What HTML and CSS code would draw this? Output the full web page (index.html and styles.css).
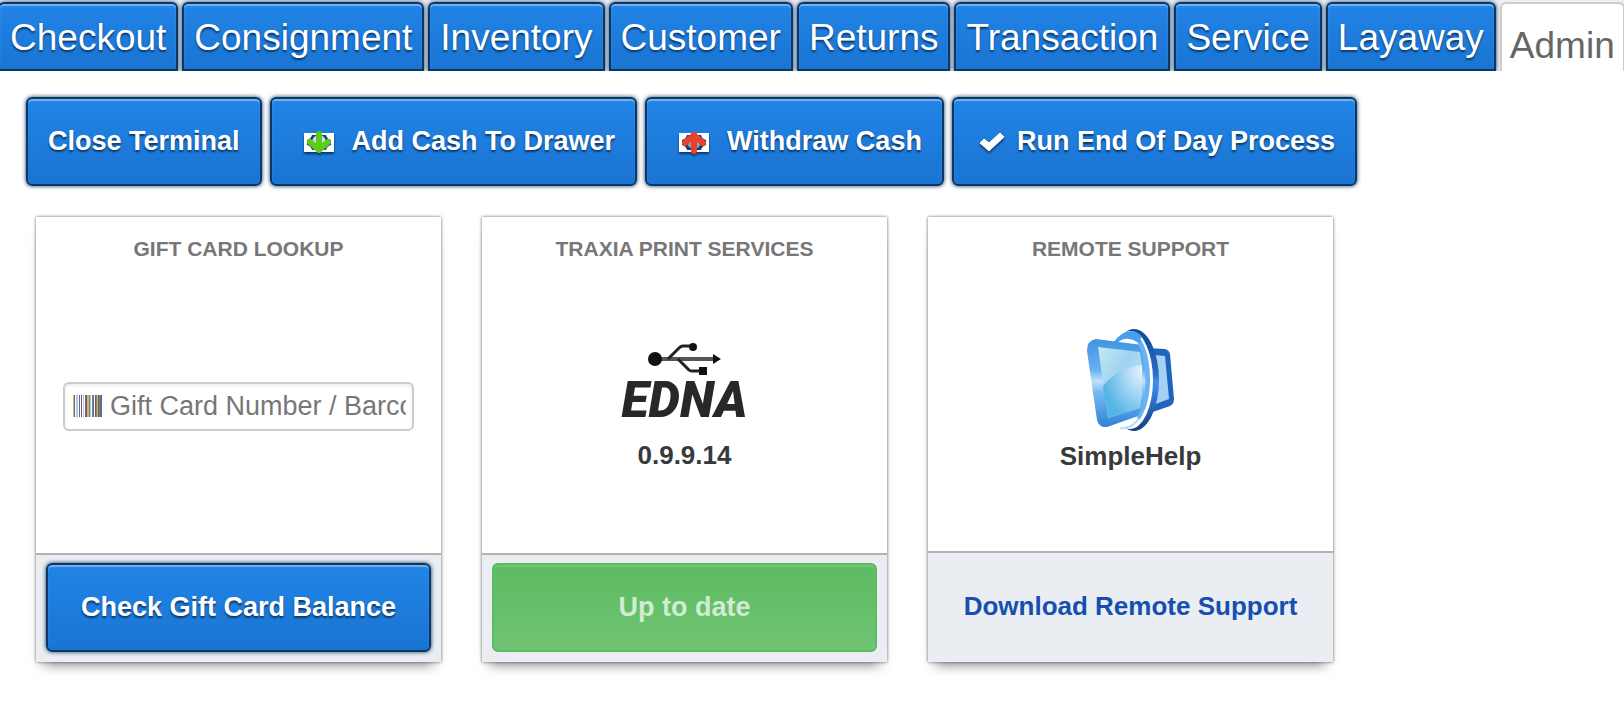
FILE: index.html
```html
<!DOCTYPE html>
<html lang="en">
	<head>
		<meta charset="UTF-8" />
		<meta name="viewport" content="width=device-width, initial-scale=1.0" />
		<title>Admin</title>
		<link rel="stylesheet" href="styles.css">
	</head>
	<body>
		<nav class="tabs">
			<a class="tab" href="#checkout">Checkout</a>
			<a class="tab" href="#consignment">Consignment</a>
			<a class="tab" href="#inventory">Inventory</a>
			<a class="tab" href="#customer">Customer</a>
			<a class="tab" href="#returns">Returns</a>
			<a class="tab" href="#transaction">Transaction</a>
			<a class="tab" href="#service">Service</a>
			<a class="tab" href="#layaway">Layaway</a>
			<a class="tab active" href="#admin" aria-current="page">Admin</a>
		</nav>

		<main class="content">
			<div class="toolbar">
				<button type="button" class="btn">Close Terminal</button>
				<button type="button" class="btn btn-cash">
					<svg width="30" height="24" viewBox="0 0 30 24" aria-hidden="true">
						<rect x="0" y="3" width="30" height="19" fill="#fff" />
						<path d="M8 5h14q1 4 5 5v5q-4 1-5 5H8q-1-4-5-5v-5q4-1 5-5z" fill="#123f73" />
						<ellipse cx="15" cy="12" rx="7" ry="7" fill="#c9dcea" />
						<path d="M15 4v15M6 12l9 8 9-8" fill="none" stroke="#5ccb1a" stroke-width="6" stroke-linecap="round" stroke-linejoin="round" />
					</svg>
					Add Cash To Drawer
				</button>
				<button type="button" class="btn btn-cash">
					<svg width="30" height="24" viewBox="0 0 30 24" aria-hidden="true">
						<rect x="0" y="3" width="30" height="19" fill="#fff" />
						<path d="M8 5h14q1 4 5 5v5q-4 1-5 5H8q-1-4-5-5v-5q4-1 5-5z" fill="#123f73" />
						<ellipse cx="15" cy="12" rx="7" ry="7" fill="#7fa4ad" />
						<path d="M15 21V6M6 13l9-8 9 8" fill="none" stroke="#ea412e" stroke-width="6" stroke-linecap="round" stroke-linejoin="round" />
					</svg>
					Withdraw Cash
				</button>
				<button type="button" class="btn btn-check">
					<svg width="26" height="20" viewBox="0 0 26 20" aria-hidden="true">
						<path d="M1 11l4-4 5 4L21 1l4 4-15 14z" fill="#fff" stroke="#fff" stroke-linejoin="round" />
					</svg>
					Run End Of Day Process
				</button>
			</div>

			<div class="cards">
				<section class="card">
					<h2>Gift Card Lookup</h2>
					<div class="card-body">
						<label class="barcode-field">
							<svg width="29" height="22" viewBox="0 0 29 22" shape-rendering="crispEdges" role="img" aria-label="Barcode">
								<path fill="#e0b070" d="M0 0h1v22H0zM14 0h2v22h-2zM24 0h1v22h-1z" />
								<path fill="#66688c" d="M1 0h1v22H1zM6 0h1v22H6zM12 0h1v22h-1zM20 0h1v22h-1zM27 0h2v22h-2z" />
								<path fill="#a5c8ee" d="M3 0h2v22H3zM10 0h1v22h-1zM17 0h1v22h-1z" />
								<path fill="#8b4a62" d="M8 0h1v22H8zM13 0h1v22h-1zM22 0h1v22h-1zM25 0h1v22h-1z" />
								<path fill="#5f9a72" d="M16 0h1v22h-1zM19 0h1v22h-1zM23 0h1v22h-1zM26 0h1v22h-1z" />
							</svg>
							<input type="text" placeholder="Gift Card Number / Barcode" aria-label="Gift Card Number / Barcode" />
						</label>
					</div>
					<div class="card-footer">
						<button type="button" class="btn">Check Gift Card Balance</button>
					</div>
				</section>

				<section class="card">
					<h2>Traxia Print Services</h2>
					<div class="card-body">
						<div class="edna">
							<svg width="74" height="34" viewBox="0 0 74 34" aria-hidden="true">
								<path d="M8 17h58" stroke="#555" stroke-width="4" />
								<path d="M20 17L31 6q2-2 4-2h9M30 17l11 11q1 1 3 1h8" fill="none" stroke="#222" stroke-width="3" />
								<circle cx="7" cy="17" r="7" fill="#111" />
								<circle cx="45" cy="5" r="4" fill="#111" />
								<path d="M51 25h8v8h-8zM65 12l8 5-8 5z" fill="#111" />
							</svg>
							<span class="edna-name">EDNA</span>
						</div>
						<p class="caption">0.9.9.14</p>
					</div>
					<div class="card-footer">
						<button type="button" class="btn btn-success" disabled>Up to date</button>
					</div>
				</section>

				<section class="card">
					<h2>Remote Support</h2>
					<div class="card-body support">
						<svg width="88" height="102" viewBox="0 0 88 102" aria-hidden="true">
							<defs>
								<linearGradient id="frame" x1="0" y1="0" x2="0" y2="1">
									<stop offset="0" stop-color="#3f93e2" />
									<stop offset=".35" stop-color="#69b1f0" />
									<stop offset=".48" stop-color="#c2e1fb" />
									<stop offset=".6" stop-color="#78bbf3" />
									<stop offset="1" stop-color="#2f80d5" />
								</linearGradient>
								<linearGradient id="ring" x1="0" y1="0" x2="0" y2="1">
									<stop offset="0" stop-color="#12468f" />
									<stop offset=".45" stop-color="#2a6fca" />
									<stop offset=".52" stop-color="#3f8ff0" />
									<stop offset="1" stop-color="#123f83" />
								</linearGradient>
								<linearGradient id="glass" x1="0" y1="0" x2="1" y2="1">
									<stop offset="0" stop-color="#c3e8f3" />
									<stop offset=".4" stop-color="#9fd4ef" />
									<stop offset="1" stop-color="#c5e4fb" />
								</linearGradient>
								<radialGradient id="glow" cx="1" cy=".1" r="1">
									<stop offset="0" stop-color="#eaf3ff" />
									<stop offset="1" stop-color="#55b5e6" />
								</radialGradient>
							</defs>
							<path d="M60 19l18 1q4 1 5 5l4 45q0 5-4 7l-23 8z" fill="#1f65bd" />
							<path d="M66 26l12 1 4 43-16 6z" fill="#a5d1f7" />
							<ellipse cx="47" cy="51" rx="25" ry="51" fill="url(#ring)" />
							<ellipse cx="43" cy="51" rx="23" ry="49" fill="#fff" />
							<path d="M26 14Q35 1 46 2q14 2 18 36L54 16Q40 4 29 15z" fill="#4a9fec" />
							<path d="M33 99q14 2 24-18" fill="none" stroke="#bcdcf8" stroke-width="2" />
							<path d="M9 10l46 6q5 14 5 35 0 22-6 35L20 98q-8 1-10-7L0 22q0-11 9-12z" fill="url(#frame)" />
							<path d="M11 18l42 5q5 28 0 56L21 89z" fill="url(#glass)" />
							<path d="M16 57q15-18 39-21 1 24-2 43L21 89z" fill="url(#glow)" />
							<path d="M53 13q8 16 8 38 0 24-9 39" fill="none" stroke="#6ab2f4" stroke-width="5" />
							<path d="M54 9q10 15 10 42 0 28-14 45" fill="none" stroke="#fff" stroke-width="2" />
						</svg>
						<p class="caption">SimpleHelp</p>
					</div>
					<div class="card-footer">
						<a class="btn-link" href="#download">Download Remote Support</a>
					</div>
				</section>
			</div>
		</main>
	</body>
</html>
```
FILE: styles.css
```css
* {
	box-sizing: border-box;
}
body {
	margin: 0;
	font-family: 'Liberation Sans', Arial, sans-serif;
	background-color: #fff;
	color: #373a3c;
}
.tabs {
	display: flex;
	gap: 4px;
	height: 71px;
	padding-top: 2px;
	background-color: #eeeef3;
	overflow: hidden;
}
.tab {
	flex: 1 0 auto;
	padding: 0 10px;
	border: 2px solid #0c3765;
	border-radius: 6px 6px 0 0;
	background: linear-gradient(#2184e6, #1a74d2);
	box-shadow: inset 0 2px 1px #75b2ee, 0 0 4px #0c3765;
	color: #fff;
	font-size: 37px;
	line-height: 67px;
	text-align: center;
	text-decoration: none;
	text-shadow: 0 2px 2px #0c3765;
}
.tab:first-child {
	margin-left: -2px;
}
.tab.active {
	padding: 8px 8px 0;
	border-color: #ccc;
	border-bottom: none;
	background: #fff;
	box-shadow: none;
	color: #666;
	text-shadow: none;
}
.content {
	padding: 26px;
}
.toolbar {
	display: flex;
	flex-wrap: wrap;
	gap: 8px;
}
.btn {
	display: flex;
	align-items: center;
	justify-content: center;
	height: 89px;
	padding: 0 20px;
	border: 2px solid #0c3765;
	border-radius: 6px;
	background: linear-gradient(#2184e6, #1a74d2);
	box-shadow: inset 0 2px 1px #75b2ee, 0 0 4px #0c3765;
	color: #fff;
	font-family: inherit;
	font-size: 27px;
	font-weight: bold;
	text-shadow: 0 2px 2px #0c3765;
	cursor: pointer;
}
.btn svg {
	overflow: visible;
	filter: drop-shadow(0 2px 1px #0c3765);
}
.btn-cash {
	gap: 18px;
	padding-left: 32px;
}
.btn-check {
	gap: 12px;
	padding-left: 25px;
}
.btn-success {
	border-color: #5cbb60;
	background: linear-gradient(#5cbb60, #70c474);
	box-shadow: inset 0 2px 1px #74c678;
	color: #d0ecd2;
	text-shadow: none;
	cursor: default;
}
.cards {
	display: flex;
	flex-wrap: wrap;
	gap: 41px;
	padding: 31px 10px;
}
.card {
	display: flex;
	flex-direction: column;
	width: 405px;
	height: 445px;
	background: #fff;
	box-shadow: 0 0 3px #666, 0 10px 12px -8px #777;
}
.card h2 {
	margin: 0;
	padding-top: 20px;
	color: #777;
	font-size: 21px;
	line-height: 24px;
	text-align: center;
	text-transform: uppercase;
}
.card-body {
	display: flex;
	flex: 1;
	flex-direction: column;
	align-items: center;
	justify-content: center;
	padding: 0 27px 2px;
}
.card-body.support {
	padding-bottom: 12px;
}
.card-footer {
	padding: 8px 10px 10px;
	border-top: 2px solid #b0b2b4;
	background-color: #eaedf1;
}
.card-footer .btn {
	width: 100%;
}
.btn-link {
	display: block;
	color: #1650ae;
	font-size: 26px;
	font-weight: bold;
	line-height: 91px;
	text-align: center;
	text-decoration: none;
}
.barcode-field {
	display: flex;
	align-items: center;
	gap: 8px;
	width: 100%;
	height: 49px;
	padding: 0 6px 0 8px;
	border: 2px solid #ccc;
	border-radius: 6px;
	box-shadow: inset 0 2px 3px #eee;
}
.barcode-field svg {
	flex: none;
}
.barcode-field input {
	flex: 1;
	min-width: 0;
	padding: 0;
	border: none;
	outline: none;
	background: none;
	font-family: inherit;
	font-size: 27px;
}
.barcode-field input::placeholder {
	color: #777;
}
.edna {
	display: flex;
	flex-direction: column;
	align-items: center;
	margin-bottom: 6px;
}
.edna-name {
	color: #282828;
	font-family: Roboto, sans-serif;
	font-size: 50px;
	font-style: italic;
	font-weight: 900;
	line-height: 48px;
}
.caption {
	margin: 10px 0 0;
	font-size: 26px;
	font-weight: bold;
	line-height: 30px;
}
```
